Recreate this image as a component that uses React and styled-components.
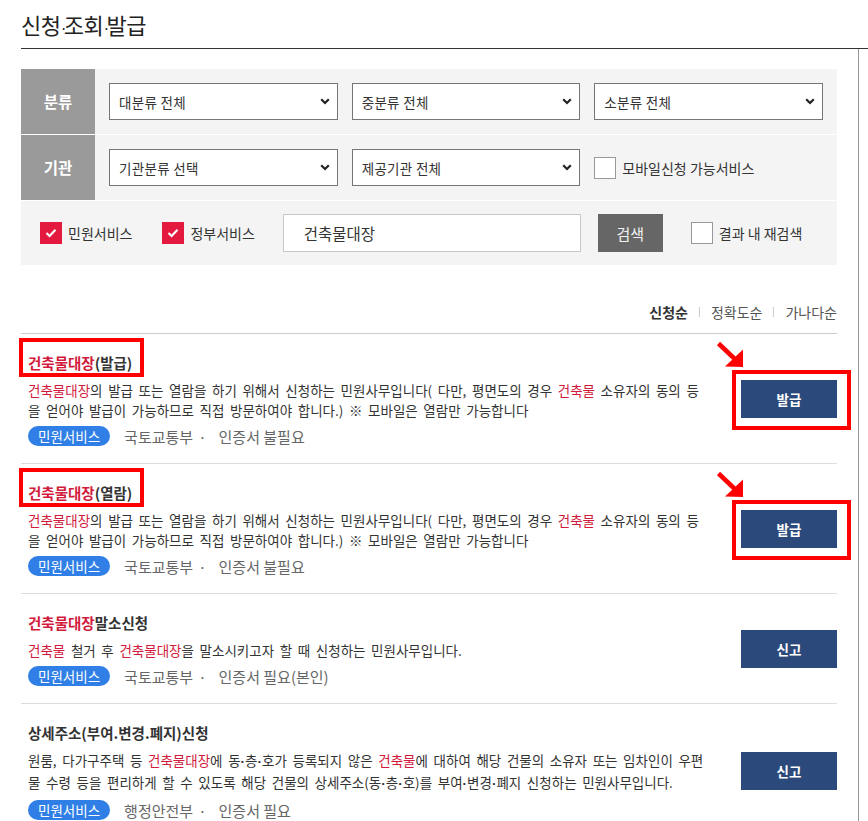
import React from "react";
import styled, { createGlobalStyle } from "styled-components";

const GlobalStyle = createGlobalStyle`
  html, body {
    margin: 0;
    padding: 0;
    overflow: hidden;
    background: #fff;
  }
  body {
    font-family: "Noto Sans CJK KR", "Noto Sans", sans-serif;
    color: #333;
  }
  * {
    box-sizing: border-box;
  }
`;

const items = [
  {
    title: [["r", "건축물대장"], ["", "(발급)"]],
    desc: [
      ["r", "건축물대장"],
      ["", "의 발급 또는 열람을 하기 위해서 신청하는 민원사무입니다( 다만, 평면도의 경우 "],
      ["r", "건축물"],
      ["", " 소유자의 동의 등을 얻어야 발급이 가능하므로 직접 방문하여야 합니다.) ※ 모바일은 열람만 가능합니다"],
    ],
    org: "국토교통부",
    cert: "인증서 불필요",
    action: "발급",
    marked: true,
  },
  {
    title: [["r", "건축물대장"], ["", "(열람)"]],
    desc: [
      ["r", "건축물대장"],
      ["", "의 발급 또는 열람을 하기 위해서 신청하는 민원사무입니다( 다만, 평면도의 경우 "],
      ["r", "건축물"],
      ["", " 소유자의 동의 등을 얻어야 발급이 가능하므로 직접 방문하여야 합니다.) ※ 모바일은 열람만 가능합니다"],
    ],
    org: "국토교통부",
    cert: "인증서 불필요",
    action: "발급",
    marked: true,
  },
  {
    title: [["r", "건축물대장"], ["", "말소신청"]],
    desc: [
      ["r", "건축물"],
      ["", " 철거 후 "],
      ["r", "건축물대장"],
      ["", "을 말소시키고자 할 때 신청하는 민원사무입니다."],
    ],
    org: "국토교통부",
    cert: "인증서 필요(본인)",
    action: "신고",
  },
  {
    title: [["", "상세주소(부여.변경.폐지)신청"]],
    desc: [
      ["", "원룸, 다가구주택 등 "],
      ["r", "건축물대장"],
      ["", "에 동·층·호가 등록되지 않은 "],
      ["r", "건축물"],
      ["", "에 대하여 해당 건물의 소유자 또는 임차인이 우편물 수령 등을 편리하게 할 수 있도록 해당 건물의 상세주소(동·층·호)를 부여·변경·폐지 신청하는 민원사무입니다."],
    ],
    org: "행정안전부",
    cert: "인증서 필요",
    action: "신고",
  },
];

function Chevron() {
  return (
    <ChevronIcon width="10" height="7" viewBox="0 0 10 7">
      <path d="M1.2 1.2 L5 5 L8.8 1.2" fill="none" stroke="#222" strokeWidth="2.2" />
    </ChevronIcon>
  );
}

function Select({ value }) {
  return (
    <SelectBox>
      <SelectEl defaultValue={value}>
        <option>{value}</option>
      </SelectEl>
      <Chevron />
    </SelectBox>
  );
}

function Check({ checked, children, $gapAfter }) {
  return (
    <CheckLabel $gapAfter={$gapAfter}>
      <Box $checked={checked}>
        {checked && (
          <svg width="12" height="10" viewBox="0 0 12 10">
            <path d="M1.5 5 L4.6 8 L10.5 1.8" fill="none" stroke="#fff" strokeWidth="2.2" />
          </svg>
        )}
      </Box>
      {children}
    </CheckLabel>
  );
}

function Arrow() {
  return (
    <ArrowMark width="30" height="30" viewBox="0 0 30 30">
      <line x1="2.5" y1="2.5" x2="22" y2="21" stroke="#f00" strokeWidth="4.5" />
      <polygon points="9,25.5 27,8.5 27,26" fill="#f00" />
    </ArrowMark>
  );
}

// the CJK font draws · with wide spacing; use a latin face for a tight dot
function Dotted({ text }) {
  const bits = text.split("·");
  return bits.map((b, i) => (
    <React.Fragment key={i}>
      {b}
      {i < bits.length - 1 && <MidDot>·</MidDot>}
    </React.Fragment>
  ));
}

function Parts({ parts }) {
  return parts.map(([kind, text], i) =>
    kind === "r" ? (
      <Hi key={i}>{text}</Hi>
    ) : (
      <Dotted key={i} text={text} />
    )
  );
}

export default function App() {
  return (
    <Page>
      <GlobalStyle />
      <Header>
        <h1>
          신청<TitleDot>·</TitleDot>조회<TitleDot>·</TitleDot>발급
        </h1>
      </Header>
      <Body>
        <Main>
          <Filter>
            <Row $h={65}>
              <RowLabel>분류</RowLabel>
              <Fields>
                <Select value="대분류 전체" />
                <Select value="중분류 전체" />
                <Select value="소분류 전체" />
              </Fields>
            </Row>
            <Row $h={66} $line>
              <RowLabel>기관</RowLabel>
              <Fields>
                <Select value="기관분류 선택" />
                <Select value="제공기관 전체" />
                <Slot>
                  <Check>모바일신청 가능서비스</Check>
                </Slot>
              </Fields>
            </Row>
            <Row $h={65} $line>
              <SearchRow>
                <Check checked $gapAfter={30}>민원서비스</Check>
                <Check checked $gapAfter={28}>정부서비스</Check>
                <SearchInput defaultValue="건축물대장" />
                <SearchBtn>검색</SearchBtn>
                <Check>결과 내 재검색</Check>
              </SearchRow>
            </Row>
          </Filter>

          <SortBar>
            <SortItem $active>신청순</SortItem>
            <Sep />
            <SortItem>정확도순</SortItem>
            <Sep />
            <SortItem>가나다순</SortItem>
          </SortBar>

          <List>
            {items.map((it, i) => (
              <Item key={i}>
                <Info>
                  <TitleLine>
                    <Name>
                      <Parts parts={it.title} />
                      {it.marked && <TitleMark />}
                    </Name>
                  </TitleLine>
                  <Desc>
                    <Parts parts={it.desc} />
                  </Desc>
                  <Meta>
                    <Pill>민원서비스</Pill>
                    <Org>{it.org}</Org>
                    <Dot>·</Dot>
                    <Org>{it.cert}</Org>
                  </Meta>
                </Info>
                <ActionWrap>
                  {it.marked && <Arrow />}
                  <ActionBtn>{it.action}</ActionBtn>
                  {it.marked && <BtnMark />}
                </ActionWrap>
              </Item>
            ))}
          </List>
        </Main>
        <Side />
      </Body>
    </Page>
  );
}

const Page = styled.div`
  padding-left: 21px;
  width: 868px;
`;

const Header = styled.div`
  height: 49px;
  padding-top: 10px;
  border-bottom: 1px solid #333;
  h1 {
    margin: 0;
    font-size: 22px;
    font-weight: 400;
    line-height: 29px;
    color: #222;
    letter-spacing: -0.4px;
  }
`;

const TitleDot = styled.span`
  display: inline-block;
  width: 5px;
  text-align: center;
  font-size: 14px;
  margin: 0 -1px;
`;

const Body = styled.div`
  display: flex;
`;

const Main = styled.div`
  width: 816px;
  padding-top: 20px;
`;

const Side = styled.div`
  margin-left: 21px;
  border-left: 1px solid #999;
  flex: 1;
  min-height: 800px;
`;

const Filter = styled.div`
  background: #f4f4f4;
`;

const Row = styled.div`
  display: flex;
  height: ${(p) => p.$h}px;
  border-top: ${(p) => (p.$line ? "1px solid #fff" : "none")};
`;

const RowLabel = styled.div`
  width: 74px;
  background: #9a9a9a;
  color: #fff;
  font-size: 15.5px;
  font-weight: 700;
  display: flex;
  align-items: center;
  justify-content: center;
  padding-bottom: 2px;
`;

const Fields = styled.div`
  flex: 1;
  display: flex;
  align-items: center;
  gap: 14px;
  padding: 0 14px;
`;

const Slot = styled.div`
  flex: 1;
  display: flex;
  align-items: center;
`;

const SelectBox = styled.div`
  flex: 1;
  position: relative;
  height: 37px;
`;

const SelectEl = styled.select`
  width: 100%;
  height: 100%;
  appearance: none;
  -webkit-appearance: none;
  border: 1px solid #767676;
  border-radius: 0;
  background: #fff;
  padding: 0 26px 0 9px;
  font-family: inherit;
  font-size: 13.5px;
  letter-spacing: 0.3px;
  color: #333;
  outline: none;
`;

const ChevronIcon = styled.svg`
  position: absolute;
  right: 8px;
  top: 15px;
  pointer-events: none;
`;

const CheckLabel = styled.label`
  display: flex;
  align-items: center;
  gap: 6px;
  font-size: 14px;
  color: #333;
  margin-right: ${(p) => p.$gapAfter || 0}px;
`;

const Box = styled.span`
  width: 22px;
  height: 22px;
  display: flex;
  align-items: center;
  justify-content: center;
  background: ${(p) => (p.$checked ? "#e4193f" : "#fff")};
  border: ${(p) => (p.$checked ? "none" : "1px solid #999")};
`;

const SearchRow = styled.div`
  flex: 1;
  display: flex;
  align-items: center;
  padding-left: 19px;
`;

const SearchInput = styled.input`
  width: 298px;
  height: 38px;
  border: 1px solid #c8c8c8;
  background: #fff;
  padding: 0 0 0 20px;
  font-family: inherit;
  font-size: 15.5px;
  color: #333;
  outline: none;
`;

const SearchBtn = styled.button`
  width: 65px;
  height: 38px;
  margin: 0 28px 0 17px;
  border: none;
  background: #666;
  color: #f2f2f2;
  font-family: inherit;
  font-size: 15px;
`;

const SortBar = styled.div`
  display: flex;
  justify-content: flex-end;
  align-items: center;
  margin-top: 37px;
  padding-bottom: 11px;
  border-bottom: 1px solid #ccc;
  line-height: 20px;
  font-size: 14px;
`;

const SortItem = styled.span`
  color: ${(p) => (p.$active ? "#333" : "#555")};
  font-weight: ${(p) => (p.$active ? 700 : 400)};
`;

const Sep = styled.span`
  width: 1px;
  height: 10px;
  background: #ccc;
  margin: 0 11px;
`;

const List = styled.div``;

const Item = styled.div`
  display: flex;
  align-items: center;
  justify-content: space-between;
  padding: 18px 0 17px 7px;
  border-bottom: 1px solid #ddd;
`;

const Info = styled.div`
  width: 680px;
`;

const TitleLine = styled.div`
  line-height: 22px;
  font-size: 14.5px;
  font-weight: 700;
  color: #333;
`;

const Name = styled.span`
  position: relative;
  display: inline-block;
`;

const TitleMark = styled.span`
  position: absolute;
  left: -9px;
  right: -12px;
  top: -14px;
  bottom: -3px;
  border: 4px solid #f00;
  pointer-events: none;
`;

const Hi = styled.span`
  color: #d21a3c;
`;

const MidDot = styled.span`
  font-family: "Liberation Sans", sans-serif;
  font-weight: 700;
`;

const Desc = styled.div`
  margin-top: 6px;
  font-size: 13.5px;
  word-spacing: 2.6px;
  line-height: 20px;
  color: #333;
  word-break: break-all;
`;

const Meta = styled.div`
  margin-top: 6px;
  height: 20px;
  display: flex;
  align-items: center;
`;

const Pill = styled.span`
  height: 20px;
  line-height: 20px;
  padding: 0 10px;
  border-radius: 10px;
  background: #2f7fe6;
  color: #fff;
  font-size: 13.5px;
  margin-right: 14px;
`;

const Org = styled.span`
  font-size: 15px;
  color: #666;
`;

const Dot = styled.span`
  font-size: 15px;
  color: #666;
  margin: 0 12px 0 5px;
`;

const ActionWrap = styled.div`
  position: relative;
  width: 96px;
`;

const ActionBtn = styled.button`
  display: block;
  width: 96px;
  height: 38px;
  border: none;
  background: #2b4a7b;
  color: #fff;
  font-family: inherit;
  font-size: 13.5px;
  font-weight: 700;
`;

const BtnMark = styled.span`
  position: absolute;
  left: -9px;
  right: -14px;
  top: -10px;
  bottom: -12px;
  border: 4px solid #f00;
  pointer-events: none;
`;

const ArrowMark = styled.svg`
  position: absolute;
  left: -25px;
  top: -39px;
`;
